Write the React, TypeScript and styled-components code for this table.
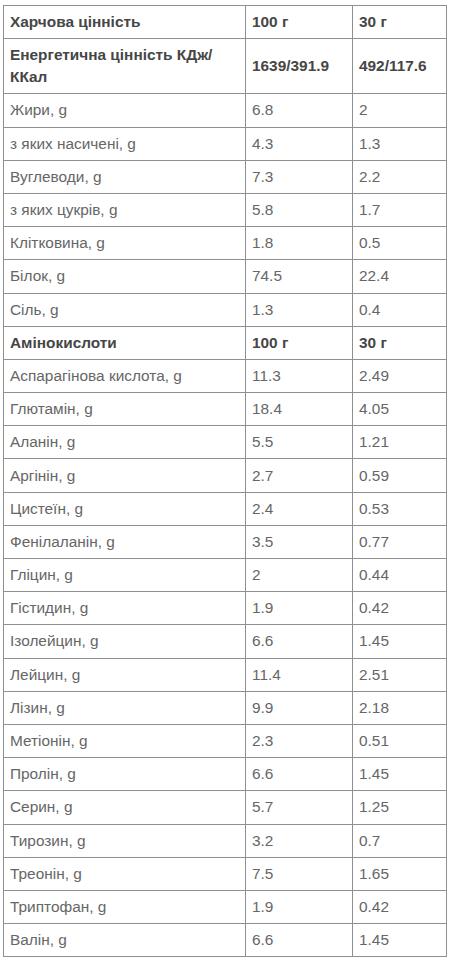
import React from "react";
import styled, {createGlobalStyle} from "styled-components";

type Row = {name: string; per100: string; per30: string; head?: boolean};

const rows: Row[] = [
	{name: "Харчова цінність", per100: "100 г", per30: "30 г", head: true},
	{name: "Енергетична цінність КДж/ККал", per100: "1639/391.9", per30: "492/117.6", head: true},
	{name: "Жири, g", per100: "6.8", per30: "2"},
	{name: "з яких насичені, g", per100: "4.3", per30: "1.3"},
	{name: "Вуглеводи, g", per100: "7.3", per30: "2.2"},
	{name: "з яких цукрів, g", per100: "5.8", per30: "1.7"},
	{name: "Клітковина, g", per100: "1.8", per30: "0.5"},
	{name: "Білок, g", per100: "74.5", per30: "22.4"},
	{name: "Сіль, g", per100: "1.3", per30: "0.4"},
	{name: "Амінокислоти", per100: "100 г", per30: "30 г", head: true},
	{name: "Аспарагінова кислота, g", per100: "11.3", per30: "2.49"},
	{name: "Глютамін, g", per100: "18.4", per30: "4.05"},
	{name: "Аланін, g", per100: "5.5", per30: "1.21"},
	{name: "Аргінін, g", per100: "2.7", per30: "0.59"},
	{name: "Цистеїн, g", per100: "2.4", per30: "0.53"},
	{name: "Фенілаланін, g", per100: "3.5", per30: "0.77"},
	{name: "Гліцин, g", per100: "2", per30: "0.44"},
	{name: "Гістидин, g", per100: "1.9", per30: "0.42"},
	{name: "Ізолейцин, g", per100: "6.6", per30: "1.45"},
	{name: "Лейцин, g", per100: "11.4", per30: "2.51"},
	{name: "Лізин, g", per100: "9.9", per30: "2.18"},
	{name: "Метіонін, g", per100: "2.3", per30: "0.51"},
	{name: "Пролін, g", per100: "6.6", per30: "1.45"},
	{name: "Серин, g", per100: "5.7", per30: "1.25"},
	{name: "Тирозин, g", per100: "3.2", per30: "0.7"},
	{name: "Треонін, g", per100: "7.5", per30: "1.65"},
	{name: "Триптофан, g", per100: "1.9", per30: "0.42"},
	{name: "Валін, g", per100: "6.6", per30: "1.45"},
];

const App = () => {
	return (
		<>
			<GlobalStyle />
			<Page>
				<NutritionTable>
					<colgroup>
						<NameCol />
						<Per100Col />
						<Per30Col />
					</colgroup>
					<tbody>
						{rows.map(row => (
							<tr key={row.name}>
								<Cell head={row.head}>{row.name}</Cell>
								<Cell head={row.head}>{row.per100}</Cell>
								<Cell head={row.head}>{row.per30}</Cell>
							</tr>
						))}
					</tbody>
				</NutritionTable>
			</Page>
		</>
	);
};

export default App;

const GlobalStyle = createGlobalStyle`
	body {
		margin: 0;
		background: #fff;
		font-family: "Liberation Sans", Arial, sans-serif;
	}
`;

const Page = styled.div`
	padding: 5px 6px 0 3px;
`;

const NutritionTable = styled.table`
	width: 443px;
	border-collapse: collapse;
	table-layout: fixed;
	font-size: 15.4px;
`;

const NameCol = styled.col`
	width: 242px;
`;

const Per100Col = styled.col`
	width: 107px;
`;

const Per30Col = styled.col`
	width: 94px;
`;

type CellProps = {
	head?: boolean;
};

const Cell = styled.td<CellProps>`
	border: 1px solid #8f8f8f;
	padding: 5.1px 6px 5.1px 6px;
	line-height: 22px;
	vertical-align: middle;
	color: ${props => (props.head ? "#464646" : "#666")};
	font-weight: ${props => (props.head ? 700 : 400)};
`;
